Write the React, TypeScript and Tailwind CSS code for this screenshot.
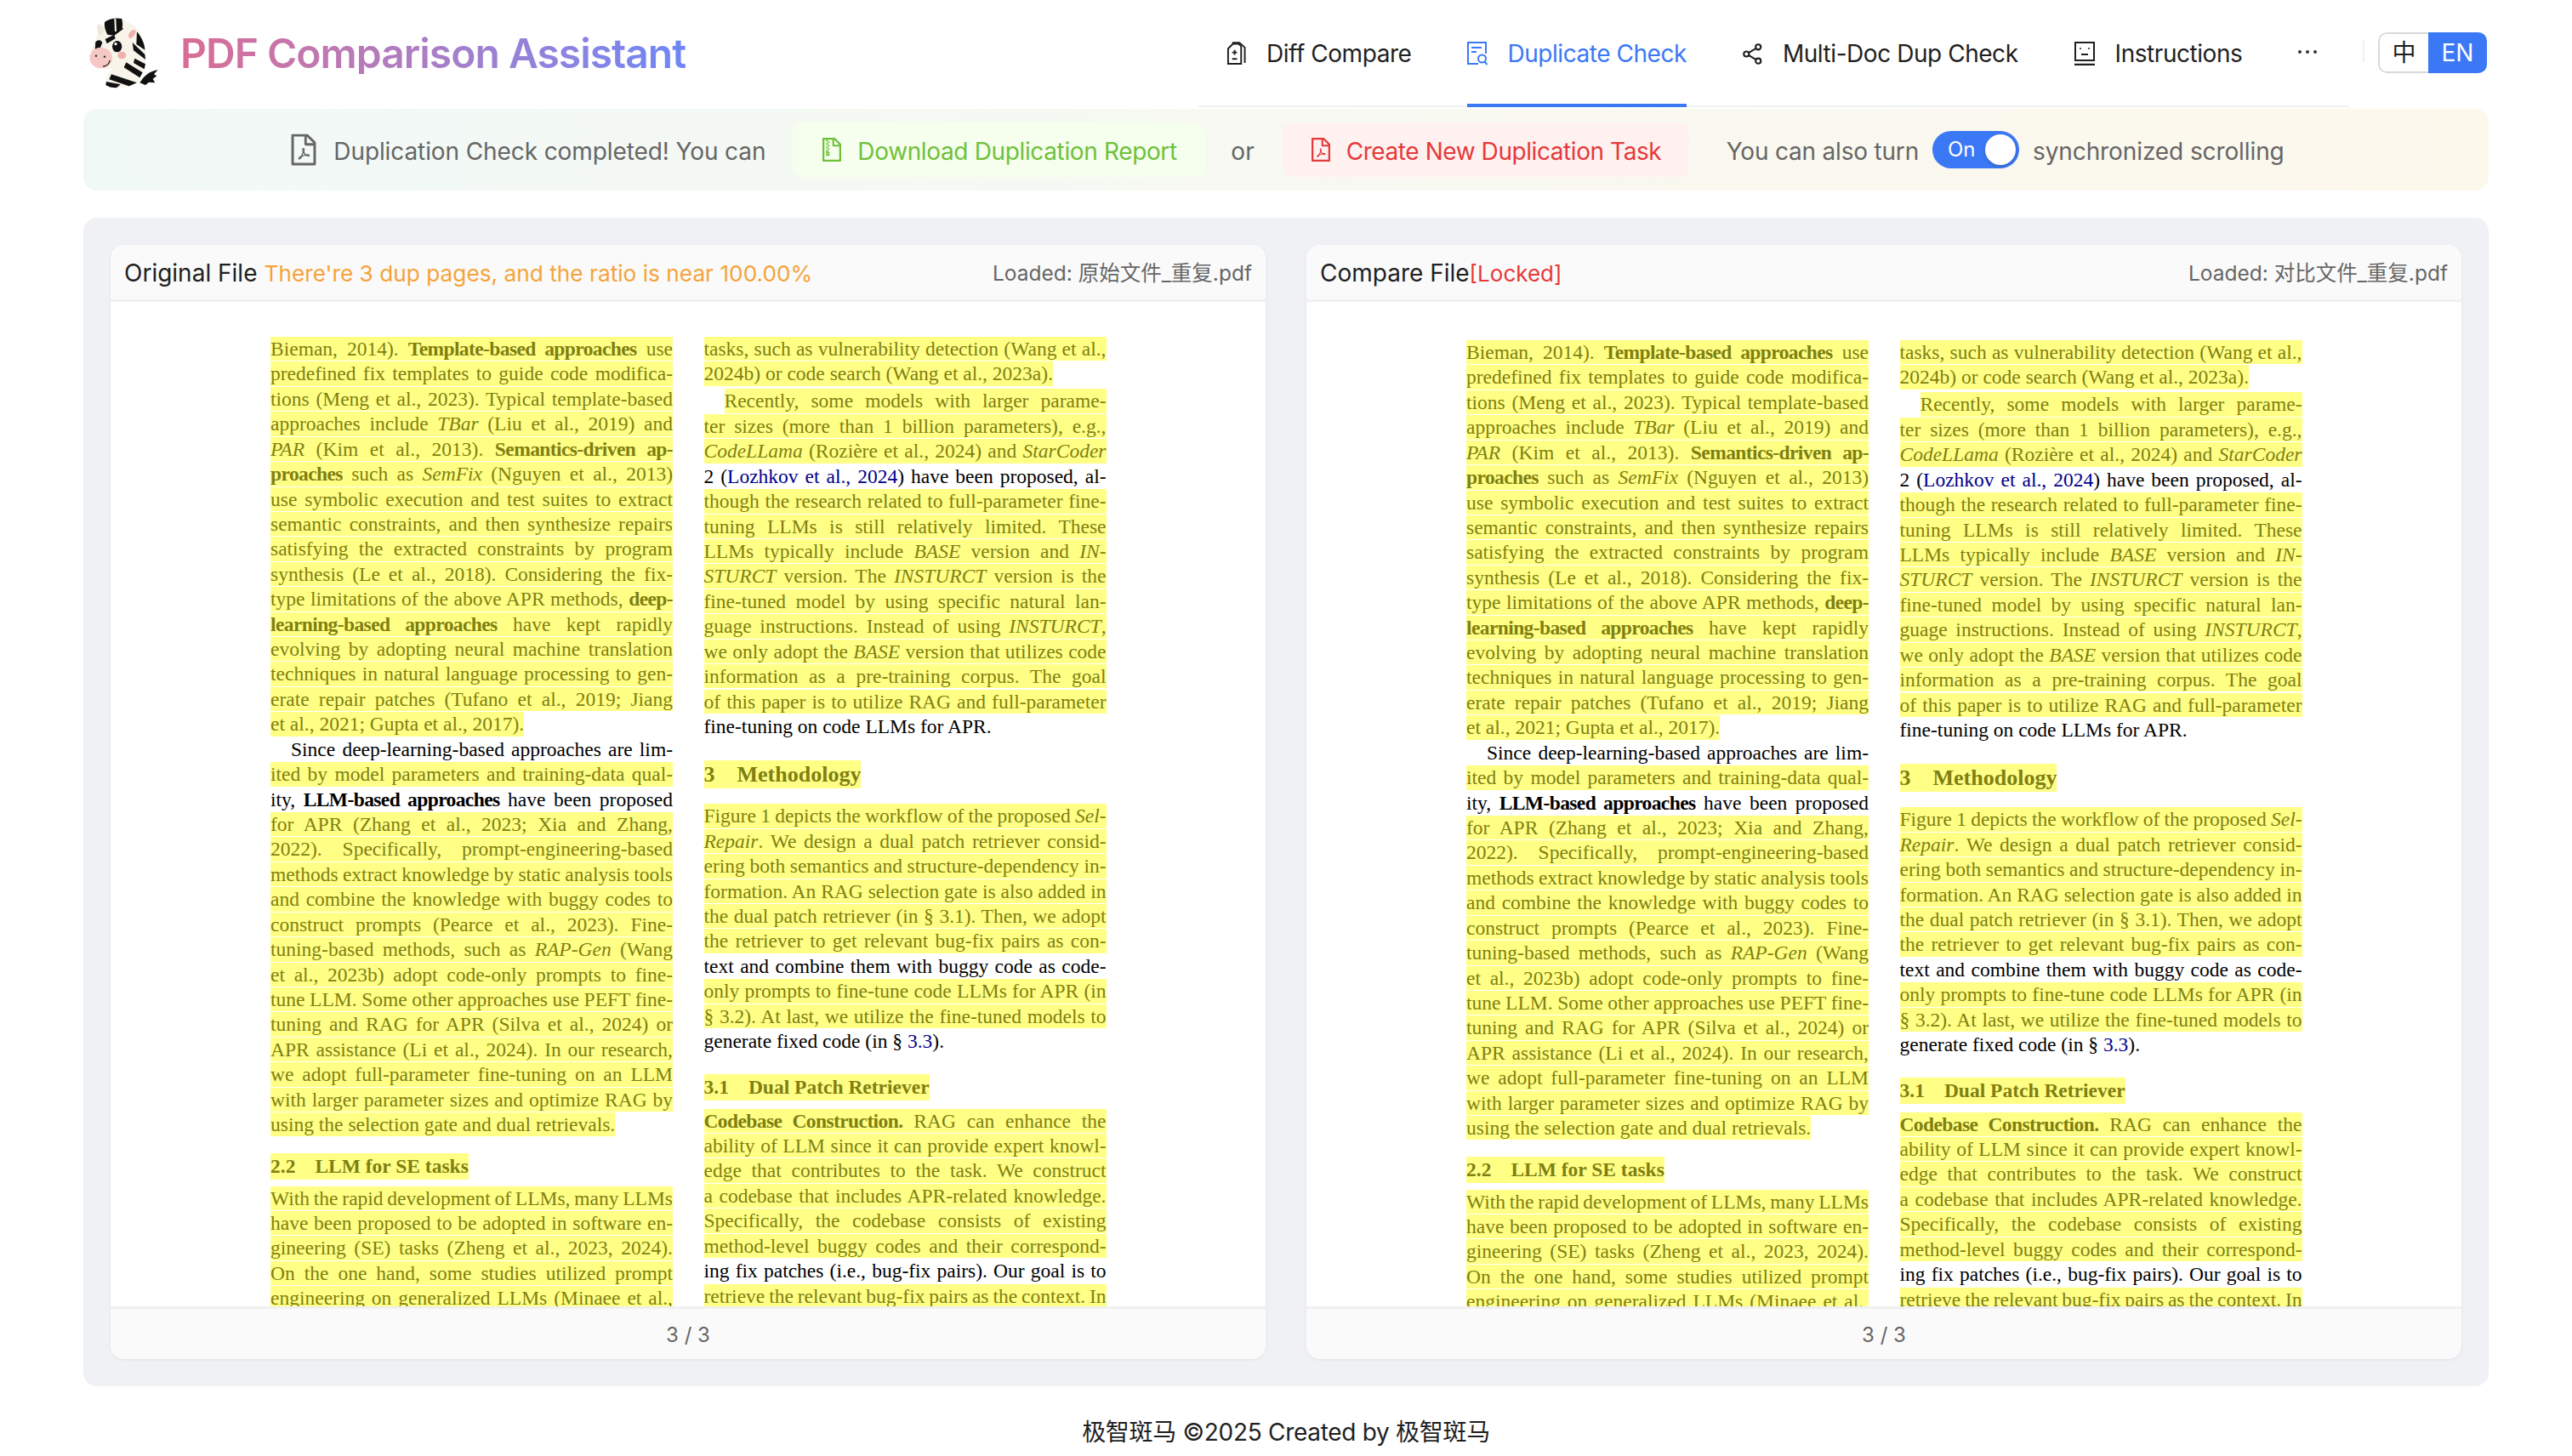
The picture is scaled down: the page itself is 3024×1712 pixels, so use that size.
import { AiOutlineFilePdf, AiOutlineFileZip } from "react-icons/ai";

type L = { t: string; n?: boolean; e?: boolean; i?: boolean };

const leftA: L[] = [
  { t: "Bieman, 2014). *Template-based approaches* use" },
  { t: "predefined fix templates to guide code modifica-" },
  { t: "tions (Meng et al., 2023). Typical template-based" },
  { t: "approaches include _TBar_ (Liu et al., 2019) and" },
  { t: "_PAR_ (Kim et al., 2013). *Semantics-driven ap-*" },
  { t: "*proaches* such as _SemFix_ (Nguyen et al., 2013)" },
  { t: "use symbolic execution and test suites to extract" },
  { t: "semantic constraints, and then synthesize repairs" },
  { t: "satisfying the extracted constraints by program" },
  { t: "synthesis (Le et al., 2018). Considering the fix-" },
  { t: "type limitations of the above APR methods, *deep-*" },
  { t: "*learning-based approaches* have kept rapidly" },
  { t: "evolving by adopting neural machine translation" },
  { t: "techniques in natural language processing to gen-" },
  { t: "erate repair patches (Tufano et al., 2019; Jiang" },
  { t: "et al., 2021; Gupta et al., 2017).", e: true },
  { t: "Since deep-learning-based approaches are lim-", n: true, i: true },
  { t: "ited by model parameters and training-data qual-" },
  { t: "ity, *LLM-based approaches* have been proposed", n: true },
  { t: "for APR (Zhang et al., 2023; Xia and Zhang," },
  { t: "2022). Specifically, prompt-engineering-based" },
  { t: "methods extract knowledge by static analysis tools" },
  { t: "and combine the knowledge with buggy codes to" },
  { t: "construct prompts (Pearce et al., 2023). Fine-" },
  { t: "tuning-based methods, such as _RAP-Gen_ (Wang" },
  { t: "et al., 2023b) adopt code-only prompts to fine-" },
  { t: "tune LLM. Some other approaches use PEFT fine-" },
  { t: "tuning and RAG for APR (Silva et al., 2024) or" },
  { t: "APR assistance (Li et al., 2024). In our research," },
  { t: "we adopt full-parameter fine-tuning on an LLM" },
  { t: "with larger parameter sizes and optimize RAG by" },
  { t: "using the selection gate and dual retrievals.", e: true },
];
const leftB: L[] = [
  { t: "With the rapid development of LLMs, many LLMs" },
  { t: "have been proposed to be adopted in software en-" },
  { t: "gineering (SE) tasks (Zheng et al., 2023, 2024)." },
  { t: "On the one hand, some studies utilized prompt" },
  { t: "engineering on generalized LLMs (Minaee et al.," },
];
const rightA: L[] = [
  { t: "tasks, such as vulnerability detection (Wang et al.," },
  { t: "2024b) or code search (Wang et al., 2023a).", e: true },
];
const rightB: L[] = [
  { t: "Recently, some models with larger parame-", i: true },
  { t: "ter sizes (more than 1 billion parameters), e.g.," },
  { t: "_CodeLLama_ (Rozière et al., 2024) and _StarCoder_" },
  { t: "2 ({Lozhkov et al., 2024}) have been proposed, al-", n: true },
  { t: "though the research related to full-parameter fine-" },
  { t: "tuning LLMs is still relatively limited. These" },
  { t: "LLMs typically include _BASE_ version and _IN-_" },
  { t: "_STURCT_ version. The _INSTURCT_ version is the" },
  { t: "fine-tuned model by using specific natural lan-" },
  { t: "guage instructions. Instead of using _INSTURCT_," },
  { t: "we only adopt the _BASE_ version that utilizes code" },
  { t: "information as a pre-training corpus. The goal" },
  { t: "of this paper is to utilize RAG and full-parameter" },
  { t: "fine-tuning on code LLMs for APR.", n: true, e: true },
];
const rightC: L[] = [
  { t: "Figure 1 depicts the workflow of the proposed _Sel-_" },
  { t: "_Repair_. We design a dual patch retriever consid-" },
  { t: "ering both semantics and structure-dependency in-" },
  { t: "formation. An RAG selection gate is also added in" },
  { t: "the dual patch retriever (in § 3.1). Then, we adopt" },
  { t: "the retriever to get relevant bug-fix pairs as con-" },
  { t: "text and combine them with buggy code as code-", n: true },
  { t: "only prompts to fine-tune code LLMs for APR (in" },
  { t: "§ 3.2). At last, we utilize the fine-tuned models to" },
  { t: "generate fixed code (in § {3.3}).", n: true, e: true },
];
const rightD: L[] = [
  { t: "*Codebase Construction.* RAG can enhance the" },
  { t: "ability of LLM since it can provide expert knowl-" },
  { t: "edge that contributes to the task. We construct" },
  { t: "a codebase that includes APR-related knowledge." },
  { t: "Specifically, the codebase consists of existing" },
  { t: "method-level buggy codes and their correspond-" },
  { t: "ing fix patches (i.e., bug-fix pairs). Our goal is to", n: true },
  { t: "retrieve the relevant bug-fix pairs as the context. In" },
];

function Inline({ t }: { t: string }) {
  const parts = t.split(/(\*[^*]+\*|_[^_]+_|\{[^}]+\})/).filter(Boolean);
  return (
    <>
      {parts.map((p, k) => {
        if (p[0] === "*") return <b key={k} className="font-bold tracking-[-0.6px]">{p.slice(1, -1)}</b>;
        if (p[0] === "_") return <i key={k} className="italic">{p.slice(1, -1)}</i>;
        if (p[0] === "{") return <span key={k} className="text-[#00008b]">{p.slice(1, -1)}</span>;
        return <span key={k}>{p}</span>;
      })}
    </>
  );
}

function Lines({ items }: { items: L[] }) {
  return (
    <>
      {items.map((l, k) => (
        <div key={k} className={l.i ? "h-[29.43px] pl-[24px]" : "h-[29.43px]"}>
          <div
            className={[
              "h-[28.4px] leading-[29px] whitespace-nowrap",
              l.n ? "text-black" : "bg-[#ffff85] text-[#7f7f12]",
              l.e ? "w-fit" : "[text-align-last:justify] [word-spacing:-2px]",
            ].join(" ")}
          >
            <Inline t={l.t} />
          </div>
        </div>
      ))}
    </>
  );
}

function Heading({ num, name, gap }: { num: string; name: string; gap: string }) {
  return (
    <div className="w-fit bg-[#ffff85] text-[#7f7f12] font-bold text-[23.5px] leading-[31px] h-[31px] whitespace-nowrap">
      <span>{num}</span>
      <span className={gap}>{name}</span>
    </div>
  );
}

function PdfPage({ pad }: { pad: string }) {
  return (
    <div className={`flex-1 min-h-0 overflow-hidden bg-white pl-[188px] flex gap-[36.5px] font-['Liberation_Serif',serif] text-[23.5px] ${pad}`}>
      <div className="w-[473px] shrink-0">
        <Lines items={leftA} />
        <div className="mt-[18px] mb-[8px]">
          <Heading num="2.2" name="LLM for SE tasks" gap="ml-[23px]" />
        </div>
        <Lines items={leftB} />
      </div>
      <div className="w-[473px] shrink-0">
        <Lines items={rightA} />
        <div className="h-[2.6px]" />
        <Lines items={rightB} />
        <div className="mt-[25px] mb-[18px]">
          <div className="w-fit bg-[#ffff85] text-[#7f7f12] font-bold text-[26px] leading-[33px] h-[33px] whitespace-nowrap">
            <span>3</span>
            <span className="ml-[26px]">Methodology</span>
          </div>
        </div>
        <Lines items={rightC} />
        <div className="mt-[23px] mb-[10px]">
          <Heading num="3.1" name="Dual Patch Retriever" gap="ml-[23px]" />
        </div>
        <Lines items={rightD} />
      </div>
    </div>
  );
}

function Panel({ title, extra, loaded, pad }: { title: string; extra: React.ReactNode; loaded: string; pad: string }) {
  return (
    <div className="w-[1358px] flex flex-col rounded-[16px] overflow-hidden bg-white shadow-[0_1px_4px_rgba(0,0,0,0.06)]">
      <div className="h-[67px] shrink-0 bg-[#fafafa] border-b-[3px] border-[#f0f0f0] pl-[16px] pr-[16px] pt-[2px] flex items-center justify-between">
        <div className="text-[28px] text-[#1f1f1f] whitespace-nowrap">
          {title}
          {extra}
        </div>
        <div className="text-[24.5px] text-[#666666] whitespace-nowrap">{loaded}</div>
      </div>
      <PdfPage pad={pad} />
      <div className="h-[62px] shrink-0 bg-[#fafafa] border-t-[3px] border-[#f0f0f0] pt-[2px] flex items-center justify-center text-[24px] text-[#666666]">
        3 / 3
      </div>
    </div>
  );
}

function Zebra() {
  return (
    <svg viewBox="0 0 300 300" className="w-[100px] h-[100px] shrink-0 ml-[-3px] mr-[17px]">
      <path d="M80 60 C120 25 185 35 215 100 C240 150 232 215 205 255 C170 285 115 285 88 268 C88 240 95 225 115 212 C80 215 40 205 32 170 C40 130 55 95 80 60Z" fill="#f8f4ea" />
      <path d="M84 48 C100 34 130 32 145 36 L150 72 L118 95 L94 92 C86 78 82 62 84 48Z" fill="#111" />
      <path d="M118 36 L124 36 L126 80 L120 82Z M150 40 L172 50 L158 72 L146 70Z" fill="#f8f4ea" />
      <path d="M60 56 C72 54 82 66 80 84 L68 96 C58 84 54 68 60 56Z" fill="#efe9dc" />
      <path d="M158 100 C158 76 180 58 196 66 C204 84 190 108 170 112Z" fill="#f8f4ea" />
      <path d="M168 100 C168 84 182 72 192 76 C196 88 186 102 174 106Z" fill="#f0b0ac" />
      <path d="M198 82 C214 100 226 126 226 146 L196 126 Z M182 120 L226 162 L228 180 L186 148Z M190 176 L228 196 L224 214 L186 192Z M160 190 L218 226 L208 244 L152 208Z M108 232 L180 256 L198 262 L170 274 L100 250Z M90 258 L140 268 L126 280 C110 280 96 276 88 270Z" fill="#111" />
      <path d="M86 108 L118 92 L122 106 L92 124Z M52 118 C60 108 72 110 76 120 L66 146 L50 146Z" fill="#111" />
      <ellipse cx="128" cy="134" rx="17" ry="20" fill="#111" />
      <circle cx="123" cy="125" r="5" fill="#fff" />
      <ellipse cx="145" cy="165" rx="15" ry="13" fill="#f2b0ab" />
      <ellipse cx="71" cy="174" rx="40" ry="37" fill="#f6c8c4" />
      <circle cx="54" cy="167" r="3.5" fill="#222" />
      <circle cx="84" cy="170" r="3.5" fill="#222" />
      <path d="M80 204 C92 202 100 194 102 184" fill="none" stroke="#222" strokeWidth="4" strokeLinecap="round" />
      <path d="M208 262 C222 240 238 222 272 216 L258 232 L268 238 L254 248 L262 262 L240 260 L228 270Z" fill="#111" />
    </svg>
  );
}

function DiffIcon() {
  return (
    <svg viewBox="0 0 24 30" className="w-[23px] h-[29px] ml-[-2px]" fill="none" stroke="#1f1f1f" strokeWidth="2">
      <path d="M2 8.5 L8 2.5 H15 L18 5.5 V27 H2Z" />
      <path d="M7 1 H16 L22.5 7 V26" />
      <path d="M7 13 H13 M10 10 V16 M7 21 H13" />
    </svg>
  );
}
function DupIcon() {
  return (
    <svg viewBox="0 0 24 28" className="w-[24px] h-[28px]" fill="none" stroke="#3b78f6" strokeWidth="2">
      <path d="M13 26 H1 V1 H22 V14" />
      <path d="M5 7 H17 M5 12 H11" />
      <circle cx="17.5" cy="20" r="4.5" />
      <path d="M20.5 23.5 L23.5 27" />
    </svg>
  );
}
function ShareIcon() {
  return (
    <svg viewBox="0 0 24 26" className="w-[23px] h-[25px]" fill="none" stroke="#1f1f1f" strokeWidth="2.2">
      <circle cx="4.5" cy="13" r="3.2" />
      <circle cx="19" cy="4.5" r="3.2" />
      <circle cx="19" cy="21.5" r="3.2" />
      <path d="M7.5 11.3 L16 6.3 M7.5 14.7 L16 19.7" />
    </svg>
  );
}
function DocIcon() {
  return (
    <svg viewBox="0 0 24 28" className="w-[24px] h-[28px]" fill="none" stroke="#1f1f1f" strokeWidth="2">
      <path d="M1 1 H23 V22 H1Z" />
      <path d="M0 27 H24" strokeWidth="2.5" />
      <path d="M8 15 H16" />
      <circle cx="7" cy="8" r="1" fill="#1f1f1f" stroke="none" />
      <circle cx="17" cy="8" r="1" fill="#1f1f1f" stroke="none" />
    </svg>
  );
}

function NavItem({ icon, label, active }: { icon: React.ReactNode; label: string; active?: boolean }) {
  return (
    <div
      className={
        active
          ? "h-[126px] flex items-center gap-[23px] border-y-[4px] border-t-transparent border-b-[#3b78f6] text-[#3b78f6] whitespace-nowrap"
          : "h-[126px] flex items-center gap-[24px] border-y-[4px] border-transparent text-[#1f1f1f] whitespace-nowrap"
      }
    >
      {icon}
      <span>{label}</span>
    </div>
  );
}

export default function App() {
  return (
    <div className="w-[3024px] h-[1712px] overflow-hidden bg-white flex flex-col font-['Inter','Noto_Sans_CJK_SC',sans-serif]">
      <header className="h-[128px] shrink-0 pl-[98px] pr-[100px] flex items-start">
        <div className="h-[120px] flex items-center">
          <Zebra />
          <div className="mt-[6px] text-[48px] font-semibold tracking-[-1px] leading-none bg-linear-to-r from-[#d96c94] to-[#6d86f7] bg-clip-text text-transparent whitespace-nowrap">
            PDF Comparison Assistant
          </div>
        </div>
        <div className="ml-auto flex items-start">
          <nav className="w-[1353px] h-[126px] border-b-[2px] border-[#f0f0f0] pl-[35px] flex gap-[66px] text-[28px] tracking-[-0.45px]">
            <NavItem icon={<DiffIcon />} label="Diff Compare" />
            <NavItem icon={<DupIcon />} label="Duplicate Check" active />
            <NavItem icon={<ShareIcon />} label="Multi-Doc Dup Check" />
            <NavItem icon={<DocIcon />} label="Instructions" />
            <div className="h-[122px] flex items-center gap-[5px]">
              <span className="w-[4px] h-[4px] rounded-full bg-[#333]" />
              <span className="w-[4px] h-[4px] rounded-full bg-[#333]" />
              <span className="w-[4px] h-[4px] rounded-full bg-[#333]" />
            </div>
          </nav>
          <div className="ml-[16px] mt-[48px] w-[2px] h-[25px] bg-[#f0f0f0]" />
          <div className="ml-[16px] mt-[38px] w-[128px] h-[48px] flex rounded-[10px] overflow-hidden text-[28px]">
            <div className="w-[59px] border-2 border-r-0 border-[#d9d9d9] rounded-l-[10px] flex items-center justify-center text-[#1f1f1f]">中</div>
            <div className="flex-1 bg-[#3b78f6] text-white flex items-center justify-center">EN</div>
          </div>
        </div>
      </header>

      <div className="mx-[98px] h-[96px] shrink-0 rounded-[16px] bg-linear-to-r from-[#f1f9f7] to-[#fdf8ec] flex items-center justify-center text-[28px] text-[#666666] whitespace-nowrap">
        <AiOutlineFilePdf className="text-[42px] text-[#666666] ml-[-2px]" />
        <span className="ml-[14px] tracking-[-0.1px] translate-y-[2px]">Duplication Check completed! You can</span>
        <div className="ml-[32px] h-[64px] w-[485px] rounded-[12px] bg-[#f6ffed] text-[#6fc13b] flex items-center pl-[30px] gap-[14px]">
          <AiOutlineFileZip className="text-[32px]" />
          <span className="tracking-[-0.36px] translate-y-[2px]">Download Duplication Report</span>
        </div>
        <span className="ml-[30px] translate-y-[2px]">or</span>
        <div className="ml-[33px] h-[64px] w-[478px] rounded-[12px] bg-[#fff1f0] text-[#e5393b] flex items-center pl-[29px] gap-[14px]">
          <AiOutlineFilePdf className="text-[32px]" />
          <span className="tracking-[-0.43px] translate-y-[2px]">Create New Duplication Task</span>
        </div>
        <span className="ml-[44px] tracking-[-0.2px] translate-y-[2px]">You can also turn</span>
        <div className="ml-[16px] w-[102px] h-[44px] rounded-full bg-[#3b78f6] flex items-center justify-between pl-[18px] pr-[4px] text-[24px] text-white">
          <span>On</span>
          <span className="w-[36px] h-[36px] rounded-full bg-white shadow-[0_2px_4px_rgba(0,35,11,0.2)]" />
        </div>
        <span className="ml-[16px] tracking-[-0.1px] translate-y-[2px]">synchronized scrolling</span>
      </div>

      <main className="mx-[98px] mt-[32px] h-[1374px] shrink-0 rounded-[16px] bg-[#f0f1f5] p-[32px] flex gap-[48px]">
        <Panel
          title="Original File"
          extra={<span className="ml-[8px] text-[26.25px] text-[#f5a33a]">There're 3 dup pages, and the ratio is near 100.00%</span>}
          loaded="Loaded: 原始文件_重复.pdf"
          pad="pt-[41px]"
        />
        <Panel
          title="Compare File"
          extra={<span className="text-[26px] text-[#e5393b]">[Locked]</span>}
          loaded="Loaded: 对比文件_重复.pdf"
          pad="pt-[45px]"
        />
      </main>

      <footer className="pt-[37px] text-center text-[28px] tracking-[-0.3px] text-[#1f1f1f] leading-[34px]">极智斑马 ©2025 Created by 极智斑马</footer>
    </div>
  );
}
